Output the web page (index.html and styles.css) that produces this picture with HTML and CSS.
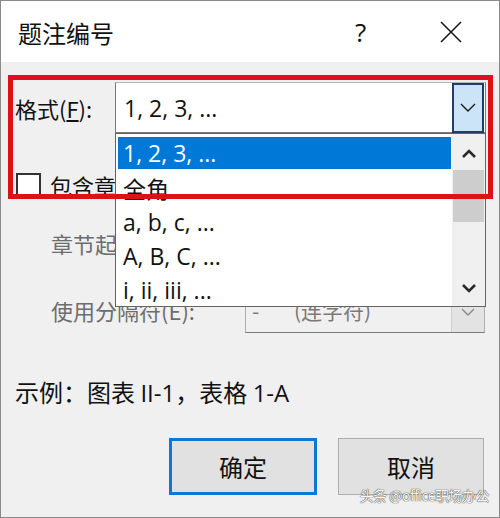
FILE: index.html
```html
<!DOCTYPE html>
<html lang="zh-CN">
<head>
<meta charset="utf-8">
<title>题注编号</title>
<link rel="stylesheet" href="styles.css">
</head>
<body>
<div class="window">
  <div class="titlebar">
    <div class="title">题注编号</div>
    <div class="help">?</div>
    <div class="close">
      <svg width="22" height="22" viewBox="0 0 22 22"><path d="M1 1 L21 21 M21 1 L1 21" stroke="#1a1a1a" stroke-width="1.6" fill="none"/></svg>
    </div>
  </div>
  <div class="content">
    <div class="row row-format">
      <div class="label">格式(<u>F</u>):</div>
      <div class="combo">
        <div class="combo-text">1, 2, 3, ...</div>
        <div class="combo-btn">
          <svg width="16" height="10" viewBox="0 0 16 10"><path d="M1 1 L8 8 L15 1" stroke="#1a1a1a" stroke-width="1.4" fill="none"/></svg>
        </div>
      </div>
    </div>
    <div class="row row-check">
      <div class="checkbox"></div>
      <div class="label">包含章节号(C)</div>
    </div>
    <div class="row row-sub">
      <div class="label sub disabled">章节起始样式(P):</div>
      <div class="select disabled-select">
        <div class="sel-text">标题 1</div>
        <div class="sel-btn"></div>
      </div>
    </div>
    <div class="row row-sub">
      <div class="label sub disabled">使用分隔符(E):</div>
      <div class="select disabled-select">
        <div class="sel-text"><span class="dash">-</span><span>(连字符)</span></div>
        <div class="sel-btn">
          <svg width="14" height="8" viewBox="0 0 14 8"><path d="M1 1 L7 7 L13 1" stroke="#888" stroke-width="1.4" fill="none"/></svg>
        </div>
      </div>
    </div>
    <div class="row row-example">
      <div class="label">示例：图表 <span class="latin">II-1</span>，表格 <span class="latin">1-A</span></div>
    </div>
    <div class="row row-buttons">
      <button class="btn btn-default">确定</button>
      <button class="btn">取消</button>
    </div>

    <div class="dropdown">
      <div class="items">
        <div class="item selected">1, 2, 3, ...</div>
        <div class="item">全角 ...</div>
        <div class="item">a, b, c, ...</div>
        <div class="item">A, B, C, ...</div>
        <div class="item">i, ii, iii, ...</div>
      </div>
      <div class="scrollbar">
        <div class="arrow up">
          <svg width="16" height="10" viewBox="0 0 16 10"><path d="M2 8 L8 2 L14 8" stroke="#2a2a2a" stroke-width="2.6" fill="none"/></svg>
        </div>
        <div class="thumb"></div>
        <div class="track"></div>
        <div class="arrow down">
          <svg width="16" height="10" viewBox="0 0 16 10"><path d="M2 2 L8 8 L14 2" stroke="#2a2a2a" stroke-width="2.6" fill="none"/></svg>
        </div>
      </div>
    </div>

    <div class="highlight"></div>
    <div class="watermark">头条 @office职场办公</div>
  </div>
</div>
</body>
</html>
```

FILE: styles.css
```css
html, body {
  margin: 0;
  padding: 0;
  background: #f0f0f0;
}

body {
  font-family: "Open Sans", "Noto Sans CJK SC", sans-serif;
  color: #111;
}

.window {
  width: 500px;
  height: 518px;
  box-sizing: border-box;
  border: 1px solid #8a8a8a;
  background: #f0f0f0;
  display: flex;
  flex-direction: column;
  overflow: hidden;
}

.titlebar {
  height: 61px;
  background: #ffffff;
  display: flex;
  align-items: center;
  flex-shrink: 0;
}

.title {
  font-family: "Noto Sans CJK SC", sans-serif;
  font-size: 24px;
  margin-left: 17px;
  color: #111;
  flex: 1;
  line-height: 1;
  margin-top: 2px;
}

.help {
  font-family: "Open Sans", sans-serif;
  font-size: 26px;
  width: 20px;
  margin-right: 65px;
  color: #111;
  line-height: 1;
}

.close {
  width: 22px;
  height: 22px;
  margin-right: 37px;
  display: flex;
}

.content {
  position: relative;
  flex: 1;
  padding: 20px 0 0 0;
  font-family: "Noto Sans CJK SC", sans-serif;
}

.row {
  display: flex;
  align-items: center;
}

.label {
  font-size: 22px;
  line-height: 1;
  white-space: nowrap;
}

.label u {
  text-decoration: underline;
  text-underline-offset: 2px;
}

.latin {
  font-family: "Open Sans", sans-serif;
  font-size: 24px;
}

.row-format {
  height: 51px;
}

.row-format .label {
  margin-left: 14px;
  width: 100px;
}

.combo {
  margin-left: 0;
  width: 371px;
  height: 51px;
  box-sizing: border-box;
  border: 1px solid #7a7a7a;
  border-top-color: #b5b5b5;
  background: #fff;
  display: flex;
  align-items: center;
}

.combo-text {
  font-family: "Open Sans", sans-serif;
  font-size: 23px;
  margin-left: 8px;
  flex: 1;
  color: #111;
}

.combo-btn {
  width: 32px;
  height: 50px;
  box-sizing: border-box;
  border: 2px solid #1f3f6a;
  background: #cce4f7;
  margin-right: 1px;
  display: flex;
  align-items: center;
  justify-content: center;
}

.row-check {
  margin-top: 38px;
  height: 28px;
}

.checkbox {
  width: 25px;
  height: 25px;
  box-sizing: border-box;
  border: 2px solid #333;
  background: #fff;
  margin-left: 15px;
  margin-right: 9px;
}

.row-sub {
  margin-top: 21px;
  height: 46px;
}

.label.sub {
  margin-left: 50px;
  width: 194px;
}

.disabled {
  color: #6d6d6d;
}

.select {
  width: 240px;
  height: 46px;
  box-sizing: border-box;
  border: 1px solid #adadad;
  border-bottom-color: #7a7a7a;
  background: #f0f0f0;
  display: flex;
  align-items: center;
}

.sel-text {
  flex: 1;
  font-size: 21px;
  color: #7a7a7a;
  margin-left: 6px;
  white-space: nowrap;
}

.dash {
  display: inline-block;
  width: 42px;
}

.sel-btn {
  width: 32px;
  height: 44px;
  background: #e3e3e3;
  border-left: 1px solid #cfcfcf;
  display: flex;
  justify-content: center;
  align-items: flex-start;
}

.sel-btn svg {
  margin-top: 20px;
}

.row-example {
  margin-top: 45px;
  height: 28px;
}

.row-example .label {
  margin-left: 14px;
  font-size: 24px;
}

.row-buttons {
  margin-top: 32px;
  height: 57px;
  justify-content: flex-end;
  gap: 21px;
  padding-right: 15px;
}

.btn {
  font-family: "Noto Sans CJK SC", sans-serif;
  font-size: 24px;
  color: #111;
  width: 146px;
  height: 57px;
  box-sizing: border-box;
  background: #e1e1e1;
  border: 1px solid #adadad;
  padding: 0;
}

.btn-default {
  width: 148px;
  border: 3px solid #0a78d4;
}

.dropdown {
  position: absolute;
  left: 114px;
  top: 71px;
  width: 371px;
  height: 174px;
  box-sizing: border-box;
  border: 1px solid #646464;
  background: #fff;
  display: flex;
}

.items {
  flex: 1;
  padding: 3px 1px 0 2px;
}

.item {
  height: 34px;
  display: flex;
  align-items: center;
  padding-left: 5px;
  font-family: "Open Sans", "Noto Sans CJK SC", sans-serif;
  font-size: 23px;
  color: #111;
  white-space: nowrap;
}

.item.selected {
  height: 32px;
  margin-bottom: 2px;
  background: #0078d7;
  color: #fff;
}

.scrollbar {
  width: 33px;
  background: #f0f0f0;
  display: flex;
  flex-direction: column;
  padding-top: 3px;
}

.arrow {
  height: 33px;
  display: flex;
  align-items: center;
  justify-content: center;
}

.thumb {
  height: 52px;
  margin: 0 1px;
  background: #cdcdcd;
}

.track {
  flex: 1;
}

.arrow.down {
  height: 36px;
}

.highlight {
  position: absolute;
  left: 7px;
  top: 13px;
  width: 485px;
  height: 124px;
  box-sizing: border-box;
  border: 5px solid #e0101a;
}

.watermark {
  position: absolute;
  right: 10px;
  bottom: 12px;
  font-size: 14px;
  color: #fafafa;
  text-shadow: 0 0 1px #333, 0 0 1px #333;
  letter-spacing: -0.5px;
}
```
